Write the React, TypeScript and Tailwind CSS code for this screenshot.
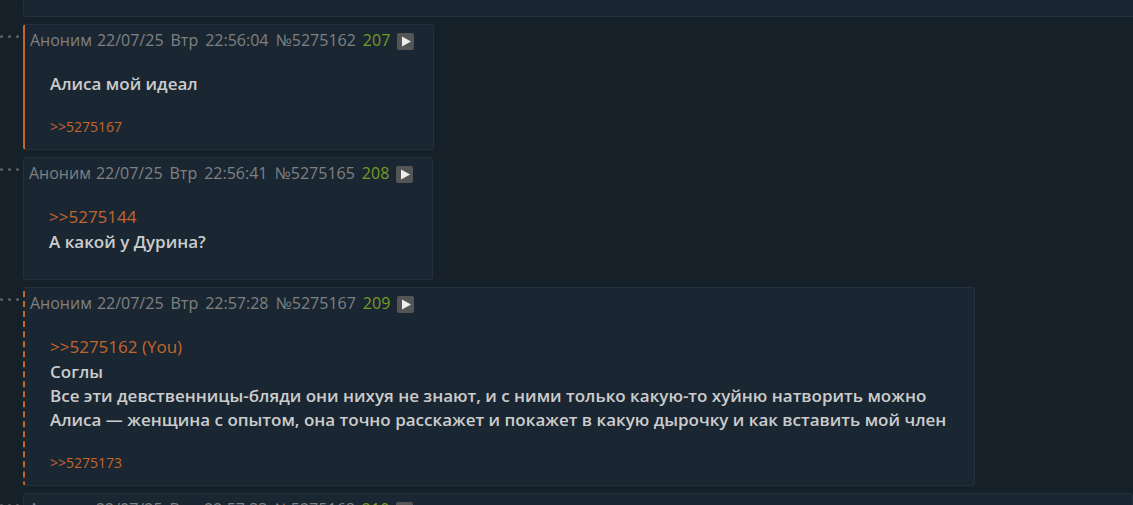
import React from "react";

type Post = {
  id: string;
  time: string;
  index: number;
  quote?: string;
  lines: string[];
  replies?: string;
  mark?: "solid" | "dashed";
  wide?: boolean;
};

const posts: Post[] = [
  { id: "5275162", time: "22:56:04", index: 207, lines: ["Алиса мой идеал"], replies: "5275167", mark: "solid" },
  { id: "5275165", time: "22:56:41", index: 208, quote: "5275144", lines: ["А какой у Дурина?"] },
  {
    id: "5275167",
    time: "22:57:28",
    index: 209,
    quote: "5275162 (You)",
    lines: [
      "Соглы",
      "Все эти девственницы-бляди они нихуя не знают, и с ними только какую-то хуйню натворить можно",
      "Алиса — женщина с опытом, она точно расскажет и покажет в какую дырочку и как вставить мой член",
    ],
    replies: "5275173",
    mark: "dashed",
  },
  { id: "5275168", time: "22:57:33", index: 210, lines: [""], wide: true },
];

const marks = {
  none: "",
  solid: "border-l-2 border-l-[#c4652a]",
  dashed: "border-l-2 border-l-[#c4652a] [border-left-style:dashed]",
};

function PostMenu() {
  return (
    <button type="button" aria-label="Меню поста" className="mt-[11px] flex w-[23px] shrink-0 gap-[5px]">
      <span className="size-[3px] rounded-full bg-[#5c6268]" />
      <span className="size-[3px] rounded-full bg-[#5c6268]" />
      <span className="size-[3px] rounded-full bg-[#5c6268]" />
    </button>
  );
}

function PostCard({ post }: { post: Post }) {
  return (
    <div className="flex items-start">
      <PostMenu />
      <article
        className={`rounded-[3px] border border-[#24313c] bg-[#1a2733] ${marks[post.mark ?? "none"]} ${post.wide ? "flex-1" : ""}`}
      >
        <header className="flex h-[30px] min-w-[407px] items-center gap-[5px] whitespace-nowrap pl-[5px] pr-[19px] text-[16px] font-medium text-[#808080]">
          <span>Аноним</span>
          <div className="flex items-center gap-[7px]">
            <time className="flex gap-[7px]">
              <span>22/07/25</span>
              <span>Втр</span>
              <span>{post.time}</span>
            </time>
            <a href={`#${post.id}`}>№{post.id}</a>
            <span className="text-[#789922]">{post.index}</span>
            <button type="button" aria-label="Ответить" className="mt-[2px] size-[17px] rounded-[2px] bg-[#555]">
              <svg viewBox="0 0 17 17" className="size-[17px]" aria-hidden="true">
                <path d="M5 3.5v10L14 8.5z" fill="#eee" />
              </svg>
            </button>
          </div>
        </header>
        <div className="pl-[25px] pr-7 pt-[17px] text-[17px] leading-6 text-[#ccc]">
          {post.quote && (
            <a href="#quote" className="block h-[25px] font-medium text-[#c4652a]">
              &gt;&gt;{post.quote}
            </a>
          )}
          {post.lines.map((line) => (
            <p key={line} className="min-h-6 font-semibold">
              {line}
            </p>
          ))}
        </div>
        {post.replies ? (
          <a href={`#${post.replies}`} className="mx-[25px] mb-3 mt-[21px] block text-[14px] leading-5 text-[#c4652a]">
            &gt;&gt;{post.replies}
          </a>
        ) : (
          <div className="h-[25px]" />
        )}
      </article>
    </div>
  );
}

export default function App() {
  return (
    <main className="flex h-screen flex-col gap-[7px] overflow-hidden bg-[#162029] font-['Open_Sans','Noto_Sans',sans-serif]">
      <div className="ml-[23px] h-[17px] shrink-0 rounded-bl-[3px] border border-t-0 border-r-0 border-[#24313c] bg-[#1a2733]" />
      {posts.map((post) => (
        <PostCard key={post.id} post={post} />
      ))}
    </main>
  );
}
